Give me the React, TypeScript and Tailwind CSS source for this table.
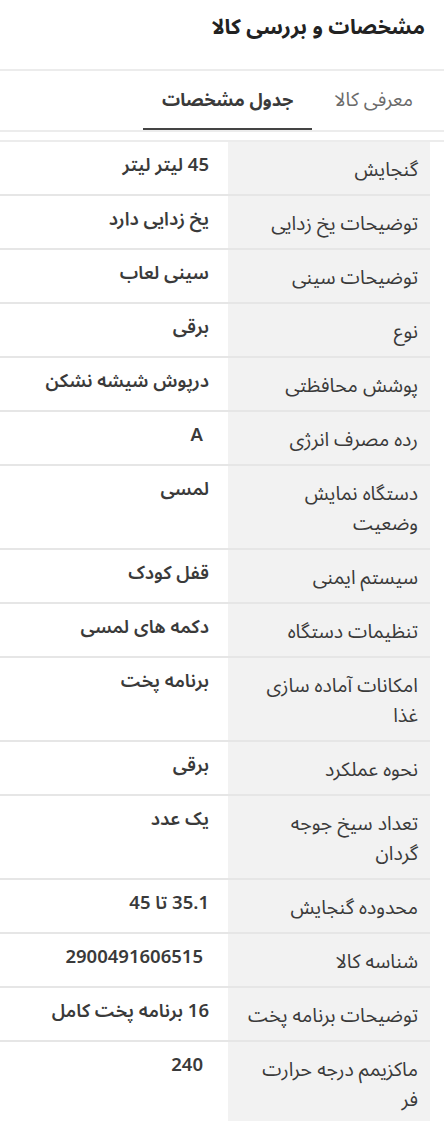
import React from "react";

const SPECS: { label: string; value: string; ltr?: boolean }[] = [
  { label: "گنجایش", value: "45 لیتر لیتر" },
  { label: "توضیحات یخ زدایی", value: "یخ زدایی دارد" },
  { label: "توضیحات سینی", value: "سینی لعاب" },
  { label: "نوع", value: "برقی" },
  { label: "پوشش محافظتی", value: "درپوش شیشه نشکن" },
  { label: "رده مصرف انرژی", value: "A", ltr: true },
  { label: "دستگاه نمایش وضعیت", value: "لمسی" },
  { label: "سیستم ایمنی", value: "قفل کودک" },
  { label: "تنظیمات دستگاه", value: "دکمه های لمسی" },
  { label: "امکانات آماده سازی غذا", value: "برنامه پخت" },
  { label: "نحوه عملکرد", value: "برقی" },
  { label: "تعداد سیخ جوجه گردان", value: "یک عدد" },
  { label: "محدوده گنجایش", value: "35.1 تا 45" },
  { label: "شناسه کالا", value: "2900491606515", ltr: true },
  { label: "توضیحات برنامه پخت", value: "16 برنامه پخت کامل" },
  { label: "ماکزیمم درجه حرارت فر", value: "240", ltr: true },
];

export default function App() {
  return (
    <div
      dir="rtl"
      className="w-[444px] min-h-[1121px] bg-white text-[#3a3a3a]"
      style={{ fontFamily: '"Noto Sans Arabic", "DejaVu Sans", sans-serif' }}
    >
      <h2 className="px-[19px] pt-[9px] pb-[24px] text-[21px] font-bold leading-[36px] text-[#222]">
        مشخصات و بررسی کالا
      </h2>

      <div className="flex gap-[4px] border-y-2 border-[#ececec] px-[13px]">
        <button className="px-[18px] pt-[14px] pb-[15px] text-[19px] leading-[30px] text-[#6b6b6b]">
          معرفی کالا
        </button>
        <button className="border-b-2 border-[#444] px-[19px] pt-[14px] pb-[13px] text-[18px] font-bold leading-[30px] text-[#3a3a3a]">
          جدول مشخصات
        </button>
      </div>

      <div className="mt-[8px] border-t-2 border-[#ececec] pr-[14px]">
        {SPECS.map((spec) => (
          <div
            key={spec.label}
            className="grid grid-cols-[202px_1fr] border-b-2 border-[#e6e6e6]"
          >
            <div className="bg-[#f2f2f2] pr-[12px] pl-[17px] pt-[13px] pb-[9px] text-[19.5px] leading-[30px]">
              {spec.label}
            </div>
            <div
              className={`pt-[9px] pb-[13px] text-[18.5px] font-semibold leading-[30px] text-[#3a3a3a] ${
                spec.ltr ? "pr-[25px]" : "pr-[19px]"
              }`}
            >
              {spec.value}
            </div>
          </div>
        ))}
      </div>
    </div>
  );
}
